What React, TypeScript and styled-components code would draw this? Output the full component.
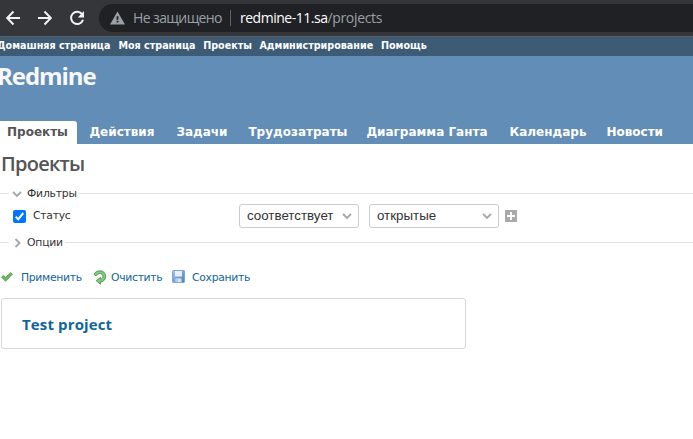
import React from "react";
import styled, { createGlobalStyle } from "styled-components";

const GlobalStyle = createGlobalStyle`
  * { box-sizing: border-box; }
  body { margin: 0; background: #fff; overflow: hidden; font-family: "DejaVu Sans", sans-serif; }
`;

const Page = styled.div`
  width: 100%;
  height: 439px;
  overflow: hidden;
  background: #fff;
`;

const BrowserBar = styled.div`
  height: 37px;
  padding: 4px 0 4px 5px;
  display: flex;
  background: #35363a;
  border-bottom: 1px solid #5d5e61;
`;

const NavButtons = styled.div`
  display: flex;
  align-items: center;
  gap: 16px;
  height: 28px;
  width: 94px;
  flex: none;
  svg { flex: none; display: block; }
`;

const AddressBar = styled.div`
  flex: 1;
  height: 28px;
  display: flex;
  align-items: center;
  padding-left: 11px;
  border-radius: 14px 0 0 14px;
  background: #202124;
  font: 14px/28px "Open Sans", sans-serif;
  white-space: nowrap;
  svg { flex: none; }
`;

const Security = styled.span`
  width: 97px;
  margin-left: 8px;
  color: #9aa0a6;
  letter-spacing: -0.6px;
`;

const Divider = styled.span`
  width: 1px;
  height: 16px;
  margin-right: 9px;
  background: #5f6368;
`;

const Host = styled.span`
  color: #fff;
  letter-spacing: -0.48px;
`;

const UrlPath = styled.span`
  color: #9aa0a6;
  letter-spacing: -0.35px;
`;

const TopMenu = styled.nav`
  height: 19px;
  display: flex;
  background: #3e5b76;
  color: #fff;
  font: bold 9.6px/17px "DejaVu Sans", sans-serif;
  white-space: nowrap;
`;

const TopLink = styled.span<{ $w: number; $shift?: number }>`
  flex: none;
  width: ${(p) => p.$w}px;
  text-indent: ${(p) => p.$shift ?? 0}px;
`;

const Header = styled.header`
  height: 88px;
  display: flex;
  flex-direction: column;
  justify-content: space-between;
  background: #628db6;
`;

const SiteTitle = styled.h1`
  margin: 0;
  padding-top: 3px;
  text-indent: -3px;
  color: #f8f8f8;
  font: bold 24px/34px "Open Sans", sans-serif;
  letter-spacing: -1.05px;
`;

const Tabs = styled.nav`
  display: flex;
  height: 23px;
`;

const Tab = styled.span<{ $w: number; $active?: boolean }>`
  flex: none;
  width: ${(p) => p.$w}px;
  padding-left: ${(p) => (p.$active ? 7 : 12.4)}px;
  background: ${(p) => (p.$active ? "#fff" : "transparent")};
  color: ${(p) => (p.$active ? "#555" : "#fff")};
  border-top-right-radius: 3px;
  font: bold 12px/23px "DejaVu Sans", sans-serif;
  white-space: nowrap;
`;

const PageTitle = styled.h2`
  margin: 0;
  padding: 4px 0 0 1px;
  height: 42px;
  color: #555;
  font: 600 20px/32px "Open Sans", sans-serif;
  letter-spacing: -0.75px;
`;

const Legend = styled.div`
  height: 14px;
  display: flex;
  align-items: center;
  color: #333;
  font: 10.8px/14px "DejaVu Sans", sans-serif;
  letter-spacing: -0.2px;
  &::before { content: ""; width: 9px; height: 1px; background: #e4e4e4; }
  &::after { content: ""; flex: 1; height: 1px; background: #e4e4e4; }
`;

const LegendText = styled.span`
  display: flex;
  align-items: center;
  gap: 5px;
  padding: 1px 2px 0 3px;
`;

const FilterRow = styled.div`
  height: 35px;
  display: flex;
  align-items: center;
  padding: 0 0 3px 13px;
`;

const FilterLabel = styled.label`
  display: flex;
  align-items: center;
  gap: 7px;
  width: 226px;
  color: #333;
  font: 10.8px/14px "DejaVu Sans", sans-serif;
  letter-spacing: -0.25px;
`;

const Checkbox = styled.span`
  width: 13px;
  height: 13px;
  border-radius: 2px;
  background: #0075ff;
  svg { display: block; }
`;

const Select = styled.div<{ $w: number }>`
  width: ${(p) => p.$w}px;
  height: 24px;
  margin-right: 10px;
  padding: 0 6px 0 7px;
  display: flex;
  align-items: center;
  justify-content: space-between;
  border: 1px solid #ccc;
  border-radius: 3px;
  color: #333;
  font: 13.33px/22px "Liberation Sans", sans-serif;
`;

const AddButton = styled.span`
  width: 12px;
  height: 12px;
  margin-left: -4px;
  background: #aaa;
  svg { display: block; }
`;

const Actions = styled.div`
  display: flex;
  align-items: center;
  height: 16px;
  margin-top: 20px;
  padding-left: 1px;
  color: #169;
  font: 10.8px/17px "DejaVu Sans", sans-serif;
  letter-spacing: -0.3px;
`;

const Action = styled.span<{ $w: number; $gap: number }>`
  display: flex;
  align-items: center;
  gap: ${(p) => p.$gap}px;
  width: ${(p) => p.$w}px;
  white-space: nowrap;
  svg { flex: none; }
`;

const ProjectCard = styled.div`
  width: 465px;
  height: 51px;
  margin: 13px 0 0 1px;
  padding-left: 20px;
  border: 1px solid #d7d7d7;
  border-radius: 3px;
  color: #169;
  font: bold 15px/50px "Open Sans", sans-serif;
  letter-spacing: 0.13px;
`;

const BackIcon = () => (
  <svg width="16" height="16" viewBox="0 0 16 16" fill="none" stroke="#f1f3f4" strokeWidth="2">
    <path d="M15 8H2.5M8.5 1.5 2.2 8l6.3 6.5" />
  </svg>
);

const ForwardIcon = () => (
  <svg width="16" height="16" viewBox="0 0 16 16" fill="none" stroke="#f1f3f4" strokeWidth="2">
    <path d="M1 8h12.5M7.5 1.5 13.8 8l-6.3 6.5" />
  </svg>
);

const ReloadIcon = () => (
  <svg width="16" height="16" viewBox="0 0 16 16">
    <path d="M13.3 4.6A6.1 6.1 0 1 0 14 9.7" fill="none" stroke="#f1f3f4" strokeWidth="2" />
    <path d="M15 1v6.4H8.8z" fill="#f1f3f4" />
  </svg>
);

const WarningIcon = () => (
  <svg width="15" height="14" viewBox="0 0 15 14">
    <path d="M7.5.6 15 13.4H0z" fill="#9aa0a6" />
    <path d="M6.6 5.2h1.8v3.5H6.6zM6.6 9.8h1.8v1.8H6.6z" fill="#202124" />
  </svg>
);

const Chevron = ({ right = false }: { right?: boolean }) => (
  <svg width="10" height="10" viewBox="0 0 10 10" fill="none" stroke="#a8a8a8" strokeWidth="1.9">
    <path d={right ? "M3.5 1l4 4-4 4" : "M1 3l4 4 4-4"} />
  </svg>
);

const ApplyIcon = () => (
  <svg width="12" height="10" viewBox="0 0 12 10">
    <path d="M.6 5.1 2.5 3.4l2 1.9L9.8.7l1.6 1.5-6.9 7.1z" fill="#6aba65" stroke="#4d9c4c" strokeWidth=".9" strokeLinejoin="round" />
  </svg>
);

const ClearIcon = () => (
  <svg width="14" height="15" viewBox="0 0 14 15">
    <path
      d="M1 4.2C2.4 1.7 4.4.8 7 .8c3.5 0 5.7 2.5 5.7 5.6 0 3.2-2.3 5.4-5.3 5.6v2.2L3.2 10.7l4.2-3.3v1.8c1.6-.2 2.5-1.3 2.5-2.8 0-1.7-1.2-2.8-2.9-2.8-1.3 0-2.1.5-2.9 1.6l-2 .4z"
      fill="#84c780"
      stroke="#4a954a"
      strokeWidth=".9"
      strokeLinejoin="round"
    />
  </svg>
);

const SaveIcon = () => (
  <svg width="13" height="15" viewBox="0 0 13 15">
    <defs>
      <linearGradient id="disk" x1="0" y1="0" x2="1" y2="1">
        <stop offset="0" stopColor="#a4c6ee" />
        <stop offset="1" stopColor="#477dc0" />
      </linearGradient>
    </defs>
    <rect x=".5" y=".5" width="12" height="12" rx=".8" fill="url(#disk)" stroke="#7fa5d6" />
    <path d="M3 1h7v5.5H3z" fill="#e6effa" />
    <path d="M3.5 8.5h6V12h-6z" fill="#dce5ef" />
    <path d="M4.3 9.2h1.5v2.3H4.3z" fill="#9bb8da" />
  </svg>
);

export default function App() {
  return (
    <Page>
      <GlobalStyle />
      <BrowserBar>
        <NavButtons>
          <BackIcon />
          <ForwardIcon />
          <ReloadIcon />
        </NavButtons>
        <AddressBar>
          <WarningIcon />
          <Security>Не защищено</Security>
          <Divider />
          <Host>redmine-11.sa</Host>
          <UrlPath>/projects</UrlPath>
        </AddressBar>
      </BrowserBar>
      <TopMenu>
        <TopLink $w={118.4} $shift={-3}>Домашняя страница</TopLink>
        <TopLink $w={84.8}>Моя страница</TopLink>
        <TopLink $w={56.2}>Проекты</TopLink>
        <TopLink $w={121.6}>Администрирование</TopLink>
        <TopLink $w={60}>Помощь</TopLink>
      </TopMenu>
      <Header>
        <SiteTitle>Redmine</SiteTitle>
        <Tabs>
          <Tab $w={77} $active>Проекты</Tab>
          <Tab $w={87}>Действия</Tab>
          <Tab $w={72}>Задачи</Tab>
          <Tab $w={118}>Трудозатраты</Tab>
          <Tab $w={143}>Диаграмма Ганта</Tab>
          <Tab $w={97}>Календарь</Tab>
          <Tab $w={80}>Новости</Tab>
        </Tabs>
      </Header>
      <PageTitle>Проекты</PageTitle>
      <Legend>
        <LegendText><Chevron />Фильтры</LegendText>
      </Legend>
      <FilterRow>
        <FilterLabel>
          <Checkbox>
            <svg width="13" height="13" viewBox="0 0 13 13" fill="none" stroke="#fff" strokeWidth="2">
              <path d="M2.7 6.8 5.2 9.3 10.3 3" />
            </svg>
          </Checkbox>
          Статус
        </FilterLabel>
        <Select $w={120}>соответствует<Chevron /></Select>
        <Select $w={130}>открытые<Chevron /></Select>
        <AddButton>
          <svg width="12" height="12" viewBox="0 0 12 12"><path d="M5 2h2v3h3v2H7v3H5V7H2V5h3z" fill="#fff" /></svg>
        </AddButton>
      </FilterRow>
      <Legend>
        <LegendText><Chevron right />Опции</LegendText>
      </Legend>
      <Actions>
        <Action $w={92} $gap={8}><ApplyIcon />Применить</Action>
        <Action $w={79} $gap={4}><ClearIcon />Очистить</Action>
        <Action $w={90} $gap={7}><SaveIcon />Сохранить</Action>
      </Actions>
      <ProjectCard>Test project</ProjectCard>
    </Page>
  );
}
